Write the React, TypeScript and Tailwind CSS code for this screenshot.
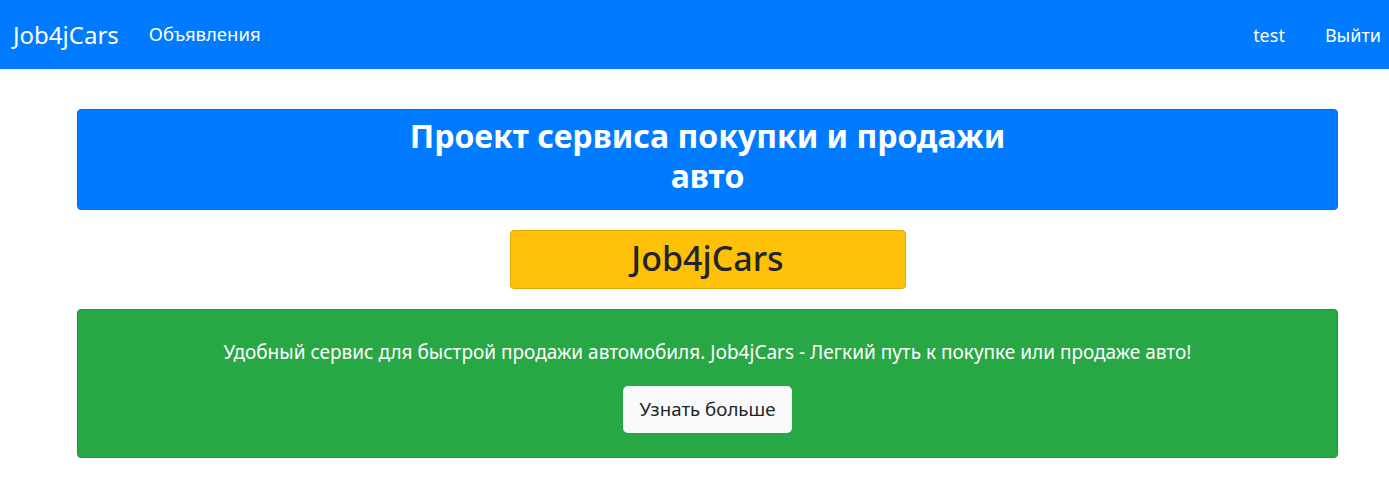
import React from 'react';

const font = { fontFamily: '"Noto Sans", "Open Sans", sans-serif' };

function Navbar() {
  return (
    <nav className="h-[69px] bg-[#007bff] flex items-center justify-between pl-[13px] pr-[8px] text-white">
      <div className="flex items-center">
        <a className="text-[24px] leading-none mr-[30px]">Job4jCars</a>
        <a className="text-[18.5px] leading-none">Объявления</a>
      </div>
      <div className="flex items-center gap-[40px] text-[18px] leading-none">
        <a>test</a>
        <a>Выйти</a>
      </div>
    </nav>
  );
}

export default function App() {
  return (
    <div style={font} className="min-h-[484px] bg-white text-[#212529]">
      <Navbar />
      <main className="pl-[77px] pr-[51px] pt-[40px] flex flex-col items-center gap-[20px]">
        <div className="w-full h-[101px] bg-[#007bff] border border-[#006fe6] rounded flex items-center justify-center">
          <h2 className="w-[620px] mb-[8px] text-center text-white font-bold text-[32px] leading-[40px]">
            Проект сервиса покупки и продажи авто
          </h2>
        </div>
        <div className="w-[396px] h-[59px] bg-[#ffc107] border border-[#e0a800] rounded flex items-center justify-center">
          <h2 className="mb-[4px] text-[34px] leading-none font-medium">Job4jCars</h2>
        </div>
        <div className="w-full h-[149px] bg-[#28a745] border border-[#23923d] rounded flex flex-col items-center pt-[30px]">
          <p className="text-white text-[19px] leading-[24px]">
            Удобный сервис для быстрой продажи автомобиля. Job4jCars - Легкий путь к покупке или продаже авто!
          </p>
          <button className="mt-[22px] h-[47px] px-[16px] bg-[#f8f9fa] rounded-[5px] text-[18.7px] text-[#212529]">
            Узнать больше
          </button>
        </div>
      </main>
    </div>
  );
}
